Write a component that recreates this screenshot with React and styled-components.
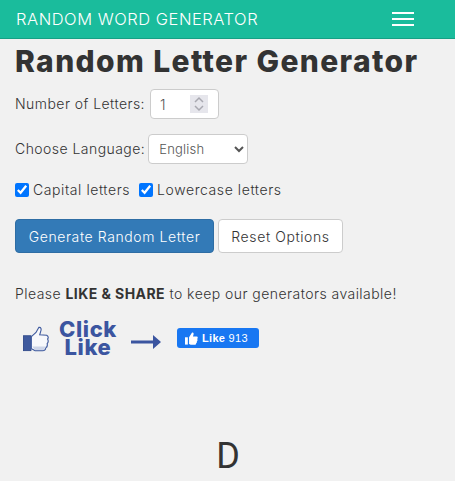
import React from 'react'
import styled, { createGlobalStyle } from 'styled-components'

const sans = `Inter, "Liberation Sans", Arial, sans-serif`

const GlobalStyle = createGlobalStyle`
    * {
        box-sizing: border-box;
    }

    body {
        margin: 0;
        background: #f1f1f1;
        color: #333;
        font: 300 14px/20px ${sans};
        letter-spacing: .45px;
    }
`

const Navbar = styled.nav`
    height: 39px;
    background: #1abc9c;
    border-bottom: 1px solid #16a085;
    display: flex;
    align-items: center;
    justify-content: space-between;
    padding: 0 41px 0 16px;
`

const Brand = styled.a`
    color: #fff;
    font-size: 16.5px;
    font-weight: 300;
    letter-spacing: .53px;
    white-space: nowrap;
`

const Burger = styled.div`
    width: 22px;
    display: flex;
    flex-direction: column;
    gap: 4px;

    span {
        height: 2px;
        background: #fff;
    }
`

const Main = styled.main`
    padding: 0 15px;
`

const Title = styled.h1`
    margin: 0;
    padding-top: 5px;
    font-size: 30px;
    line-height: 34px;
    font-weight: 800;
    color: #333;
    letter-spacing: 1.38px;
    white-space: nowrap;
`

const Field = styled.div`
    display: flex;
    align-items: center;
    gap: ${p => p.$gap}px;
    height: 30px;
    margin-top: ${p => p.$top}px;
`

const NumberBox = styled.div`
    width: 69px;
    height: 30px;
    display: flex;
    align-items: center;
    padding: 0 10px 0 9px;
    border: 1px solid #ccc;
    border-radius: 4px;
    background: #fff;
`

const NumberInput = styled.input`
    flex: 1;
    min-width: 0;
    padding: 0;
    border: 0;
    outline: 0;
    background: none;
    color: #555;
    font: 300 14px ${sans};

    &::-webkit-inner-spin-button {
        display: none;
    }
`

const Spin = styled.svg`
    display: block;
    flex: none;
    background: #e6e6ec;
`

const Select = styled.select`
    width: 100px;
    height: 30px;
    padding: 0 6px;
    border: 1px solid #ccc;
    border-radius: 4px;
    background: #fff;
    color: #555;
    font: 300 13px ${sans};
    letter-spacing: .2px;
`

const Checks = styled.div`
    display: flex;
    gap: 9px;
    margin-top: 16px;
`

const Check = styled.label`
    display: flex;
    align-items: center;
    gap: 4px;
    letter-spacing: .58px;

    input {
        width: 14px;
        height: 14px;
        margin: 0;
    }
`

const Buttons = styled.div`
    display: flex;
    gap: 4px;
    margin-top: 19px;
`

const Button = styled.button`
    height: 34px;
    padding: 0;
    width: ${p => p.$width}px;
    border: 1px solid ${p => (p.$primary ? '#2e6da4' : '#ccc')};
    border-radius: 4px;
    background: ${p => (p.$primary ? '#337ab7' : '#fff')};
    color: ${p => (p.$primary ? '#fff' : '#333')};
    font: 300 14px ${sans};
    letter-spacing: .6px;
`

const Share = styled.p`
    margin: 31px 0 0;
    white-space: nowrap;

    b {
        font-weight: 700;
    }
`

const LikeRow = styled.div`
    display: flex;
    align-items: center;
    margin-top: 16px;
    padding-left: 8px;
`

const Thumb = styled.svg`
    margin-top: 2px;
`

const ClickLike = styled.div`
    width: 60px;
    margin: 0 13px 0 9px;
    color: #3b55a0;
    font-size: 22px;
    line-height: 18px;
    font-weight: 800;
    letter-spacing: .6px;
    text-align: center;
`

const Arrow = styled.svg`
    margin: 8px 16px 0 0;
`

const FbButton = styled.div`
    width: 82px;
    height: 20px;
    display: flex;
    align-items: center;
    gap: 4px;
    padding-left: 8px;
    border-radius: 3px;
    background: #1877f2;
    color: #fff;
    font: 400 11px "Liberation Sans", Arial, sans-serif;
    letter-spacing: .3px;

    b {
        font-weight: 700;
    }
`

const Letter = styled.div`
    margin-top: 78px;
    text-align: center;
    font-family: Roboto, sans-serif;
    font-size: 36px;
    line-height: 44px;
    font-weight: 400;
    letter-spacing: 0;
    color: #333;
    padding-left: 1px;
`

function App() {
    return (
        <>
            <GlobalStyle />
            <Navbar>
                <Brand>RANDOM WORD GENERATOR</Brand>
                <Burger><span /><span /><span /></Burger>
            </Navbar>
            <Main>
                <Title>Random Letter Generator</Title>
                <Field $gap={5} $top={11}>
                    Number of Letters:
                    <NumberBox>
                        <NumberInput type="number" defaultValue={1} />
                        <Spin width="18" height="18" viewBox="0 0 18 18">
                            <path d="M5 7 L9 3 L13 7 M5 11 L9 15 L13 11" fill="none" stroke="#a8a8b0" strokeWidth="1.5" />
                        </Spin>
                    </NumberBox>
                </Field>
                <Field $gap={3} $top={15}>
                    Choose Language:
                    <Select defaultValue="English">
                        <option>English</option>
                    </Select>
                </Field>
                <Checks>
                    <Check><input type="checkbox" defaultChecked /> Capital letters</Check>
                    <Check><input type="checkbox" defaultChecked /> Lowercase letters</Check>
                </Checks>
                <Buttons>
                    <Button $primary $width={199}>Generate Random Letter</Button>
                    <Button $width={125}>Reset Options</Button>
                </Buttons>
                <Share>Please <b>LIKE &amp; SHARE</b> to keep our generators available!</Share>
                <LikeRow>
                    <Thumb width="26" height="26" viewBox="0 0 28 28">
                        <rect x="0.5" y="10.5" width="8" height="16" fill="#3f5a9e" stroke="#344d8c" />
                        <path
                            d="M9 11.5 L14 7 L17 1.5 C19.5 1 20 3.5 19 6 L18 9.5 L25.5 10 C27.5 11 27.5 13 26.5 14 C27.5 16 27 18 26 19 C26.5 21 25.5 23 24.5 23.5 C24.5 25.5 23 26.5 21 26.5 L13 26.5 L9 24.5 Z"
                            fill="#f7f8fb"
                            stroke="#3f5a9e"
                            strokeWidth="1.2"
                        />
                        <path d="M10 22 L25 22 L22 26 L13 26 Z" fill="#cdd5e8" />
                    </Thumb>
                    <ClickLike>Click Like</ClickLike>
                    <Arrow width="30" height="14" viewBox="0 0 30 14">
                        <path d="M0 5.5 H22 V0 L30 7 L22 14 V8.5 H0 Z" fill="#3b55a0" />
                    </Arrow>
                    <FbButton>
                        <svg width="13" height="13" viewBox="0 0 16 16">
                            <rect x="0" y="6.5" width="3.5" height="9" fill="#fff" />
                            <path d="M5 6.5 L8.5 1 C10 0 11 1.5 10.5 3 L9.8 5.5 H14.5 C16 5.8 16 7.5 15 8.5 C15.8 9.5 15.5 11 14.6 11.5 C15 12.8 14.4 13.6 13.6 14 C13.6 15.2 12.8 15.7 12 15.7 H7 L5 14.8 Z" fill="#fff" />
                        </svg>
                        <span><b>Like</b> 913</span>
                    </FbButton>
                </LikeRow>
                <Letter>D</Letter>
            </Main>
        </>
    )
}

export default App
